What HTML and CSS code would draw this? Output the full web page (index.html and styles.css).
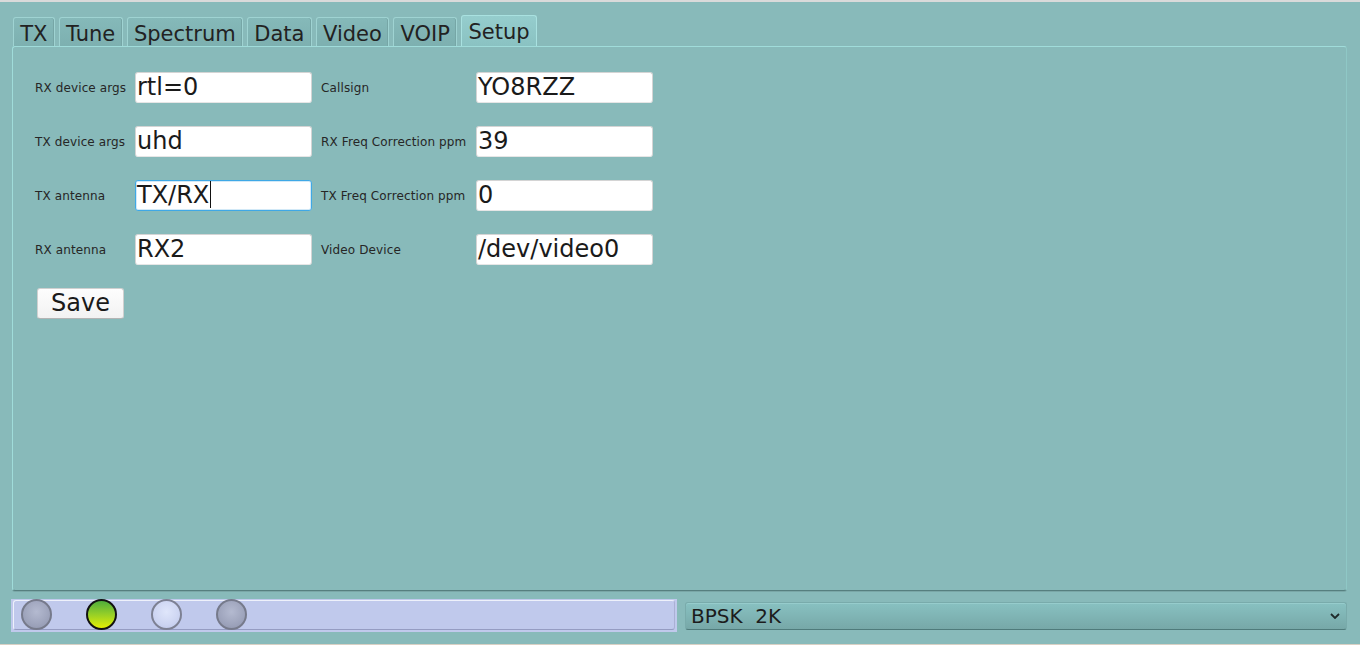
FILE: index.html
```html
<!DOCTYPE html>
<html>
<head>
<meta charset="utf-8">
<title>Setup</title>
<link rel="stylesheet" href="styles.css">
</head>
<body>
<div class="tabbar">
  <div class="tab">TX</div>
  <div class="tab">Tune</div>
  <div class="tab">Spectrum</div>
  <div class="tab">Data</div>
  <div class="tab">Video</div>
  <div class="tab">VOIP</div>
  <div class="tab active">Setup</div>
</div>
<div class="panel">
  <div class="form">
    <div class="label">RX device args</div>
    <div class="field">rtl=0</div>
    <div class="label">Callsign</div>
    <div class="field">YO8RZZ</div>

    <div class="label">TX device args</div>
    <div class="field">uhd</div>
    <div class="label">RX Freq Correction ppm</div>
    <div class="field">39</div>

    <div class="label">TX antenna</div>
    <div class="field focused">TX/RX<span class="caret"></span></div>
    <div class="label">TX Freq Correction ppm</div>
    <div class="field">0</div>

    <div class="label">RX antenna</div>
    <div class="field">RX2</div>
    <div class="label">Video Device</div>
    <div class="field">/dev/video0</div>
  </div>
  <div class="button">Save</div>
</div>
<div class="statusbar">
  <div class="ledbox">
    <div class="ledframe">
      <span class="led grey"></span>
      <span class="led green"></span>
      <span class="led light"></span>
      <span class="led grey"></span>
    </div>
  </div>
  <div class="combo">
    <span class="combo-text">BPSK  2K</span>
    <svg class="chevron" width="10" height="6" viewBox="0 0 10 6"><path d="M1 1 L5 5 L9 1" fill="none" stroke="#1e2a2a" stroke-width="1.8"/></svg>
  </div>
</div>
</body>
</html>
```

FILE: styles.css
```css
html {
  background: #d8d0c4;
}
body {
  margin: 0;
  height: 644px;
  box-sizing: border-box;
  background: #88baba;
  border-top: 2px solid #dadada;
  font-family: "DejaVu Sans", sans-serif;
  color: #1f1f1f;
  overflow: hidden;
}

/* tabs */
.tabbar {
  display: flex;
  align-items: flex-end;
  gap: 4px;
  margin-top: 13px;
  height: 31px;
  padding-left: 13px;
}
.tab {
  height: 29px;
  box-sizing: border-box;
  padding: 4px 6.3px 0 6.3px;
  font-size: 21px;
  line-height: 24px;
  color: #222;
  background: linear-gradient(#85b9b9, #7db0b0);
  border: 1px solid #9fd3d2;
  border-bottom: none;
  border-radius: 3px 3px 0 0;
  box-shadow: inset -1px 0 0 #76a6a6;
  white-space: nowrap;
}
.tab.active {
  height: 31px;
  padding-top: 4px;
  background: linear-gradient(#95cdcd, #8ac2c2);
  border-color: #a9e1e0;
  box-shadow: none;
}

/* panel */
.panel {
  margin: 0 13px 0 12px;
  height: 545px;
  box-sizing: border-box;
  border: 1px solid #a0dcda;
  border-bottom-color: #567f7f;
  border-right-color: #8fc8c6;
  border-radius: 3px;
  box-shadow: 0 1px 0 #7aa7a7;
  padding: 25px 0 0 22px;
}
.form {
  display: grid;
  grid-template-columns: 91px 177px 146px 177px;
  column-gap: 9px;
  row-gap: 23px;
  align-items: center;
}
.label {
  font-size: 12px;
  letter-spacing: 0.12px;
  color: #262626;
  white-space: nowrap;
}
.field {
  height: 31px;
  box-sizing: border-box;
  background: #ffffff;
  border: 1px solid #d4d4d4;
  border-bottom-color: #e6e6e6;
  border-radius: 3px;
  padding-left: 1px;
  font-size: 24px;
  line-height: 29px;
  color: #1a1a1a;
  white-space: nowrap;
  overflow: hidden;
}
.field.focused {
  border-color: #3fa8e6;
  box-shadow: inset 0 0 0 1px #d2e9f7;
}
.caret {
  display: inline-block;
  width: 1px;
  height: 27px;
  background: #111;
  vertical-align: -5px;
  margin-left: 1px;
}
.button {
  margin: 23px 0 0 2px;
  width: 87px;
  height: 31px;
  box-sizing: border-box;
  background: linear-gradient(#fdfdfd, #f2f2f2);
  border: 1px solid #d0d0d0;
  border-bottom-color: #b4b4b4;
  border-radius: 3px;
  font-size: 24px;
  line-height: 29px;
  text-align: center;
  color: #1a1a1a;
}

/* status bar */
.statusbar {
  display: flex;
  align-items: center;
  gap: 8px;
  margin: 8px 13px 0 11px;
}
.ledbox {
  width: 666px;
  height: 33px;
  box-sizing: border-box;
  background: #c0c9ec;
  padding: 1px 2px 2px 2px;
}
.ledframe {
  height: 100%;
  box-sizing: border-box;
  border: 1px solid #eef1fb;
  border-bottom-color: #959cc2;
  border-right-color: #aab0d4;
  border-radius: 3px;
  display: flex;
  align-items: center;
  gap: 34px;
  padding-left: 7px;
}
.led {
  width: 31px;
  height: 31px;
  box-sizing: border-box;
  border-radius: 50%;
  margin-top: -2px;
}
.led.grey {
  background: radial-gradient(circle at 50% 40%, #b4bad0 0%, #9ea4bc 60%, #8d93ac 100%);
  border: 2px solid #767a8b;
}
.led.green {
  background: linear-gradient(#4fae3b 0%, #8fcc2a 45%, #e3ef04 100%);
  border: 2px solid #121212;
}
.led.light {
  background: radial-gradient(circle at 50% 40%, #dfe6fb 0%, #cdd5f2 60%, #bac3e6 100%);
  border: 2px solid #7d8193;
}
.combo {
  flex: 1;
  height: 28px;
  box-sizing: border-box;
  display: flex;
  align-items: center;
  justify-content: space-between;
  padding: 0 6px 0 5px;
  background: linear-gradient(#88c1c1, #77a8a8);
  border: 1px solid #79abab;
  border-bottom-color: #4f7b7b;
  border-radius: 3px;
  box-shadow: inset 0 1px 0 #96cccc;
}
.combo-text {
  font-size: 20px;
  white-space: pre;
  color: #1c1c1c;
}
.chevron {
  display: block;
}
```
